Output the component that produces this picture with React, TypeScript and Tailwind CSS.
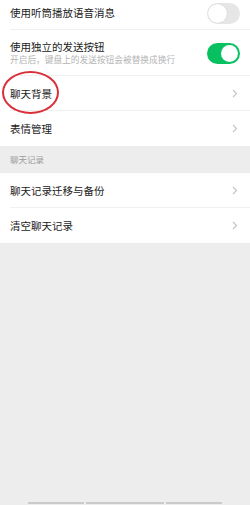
import React from "react";

const Chevron = () => (
  <svg width="6" height="9" viewBox="0 0 6 9" className="shrink-0">
    <path d="M1 1 L4.5 4.5 L1 8" fill="none" stroke="#c4c4c4" strokeWidth="1.1" />
  </svg>
);

const Toggle = ({ on }: { on: boolean }) =>
  on ? (
    <div className="w-[33px] h-[21px] rounded-full bg-[#07c160] flex items-center justify-end pr-[2px]">
      <div className="w-[17px] h-[17px] rounded-full bg-white" />
    </div>
  ) : (
    <div className="w-[33px] h-[21px] rounded-full bg-[#e6e6e6] flex items-center justify-start pl-[1px]">
      <div className="w-[19px] h-[19px] rounded-full bg-white shadow-[0_0_1px_rgba(0,0,0,0.2)]" />
    </div>
  );

const NavRow = ({ label, border }: { label: string; border?: boolean }) => (
  <div className="relative h-[35px] flex items-center justify-between pl-[10px] pr-[12px]">
    <span className="text-[10.5px] text-[#1a1a1a]">{label}</span>
    <Chevron />
    {border && <div className="absolute left-[10px] right-0 bottom-0 h-px bg-[#f0f0f0]" />}
  </div>
);

export default function App() {
  return (
    <div
      className="w-[250px] min-h-[505px] bg-[#ededed] flex flex-col"
      style={{ fontFamily: '"Noto Sans CJK SC", "Noto Sans", sans-serif' }}
    >
      <div className="bg-white">
        <div className="relative h-[30px] flex items-center justify-between pl-[10px] pr-[10px] pb-[4px]">
          <span className="text-[10.5px] text-[#1a1a1a]">使用听筒播放语音消息</span>
          <Toggle on={false} />
          <div className="absolute left-[10px] right-0 bottom-0 h-px bg-[#f0f0f0]" />
        </div>
        <div className="relative h-[46px] flex items-center justify-between pl-[10px] pr-[10px]">
          <div className="flex flex-col">
            <span className="text-[10.5px] leading-[14px] text-[#1a1a1a]">使用独立的发送按钮</span>
            <span className="text-[8.7px] leading-[12px] text-[#b4b4b4]">开启后，键盘上的发送按钮会被替换成换行</span>
          </div>
          <Toggle on={true} />
          <div className="absolute left-[10px] right-0 bottom-0 h-px bg-[#f0f0f0]" />
        </div>
        <div className="relative">
          <NavRow label="聊天背景" border />
          <div className="absolute left-[2px] top-[-5px] w-[57px] h-[43px] rounded-[50%] border-2 border-[#d9303a]" />
        </div>
        <NavRow label="表情管理" />
      </div>
      <div className="h-[27px] flex items-center pl-[10px]">
        <span className="text-[8.5px] text-[#9a9a9a]">聊天记录</span>
      </div>
      <div className="bg-white">
        <NavRow label="聊天记录迁移与备份" border />
        <NavRow label="清空聊天记录" />
      </div>
      <div className="mt-auto flex justify-center gap-[2px] pb-[1px] pl-[0px]">
        <div className="w-[56px] h-[2px] bg-[#cacaca]" />
        <div className="w-[78px] h-[2px] bg-[#cacaca]" />
        <div className="w-[56px] h-[2px] bg-[#cacaca]" />
      </div>
    </div>
  );
}
